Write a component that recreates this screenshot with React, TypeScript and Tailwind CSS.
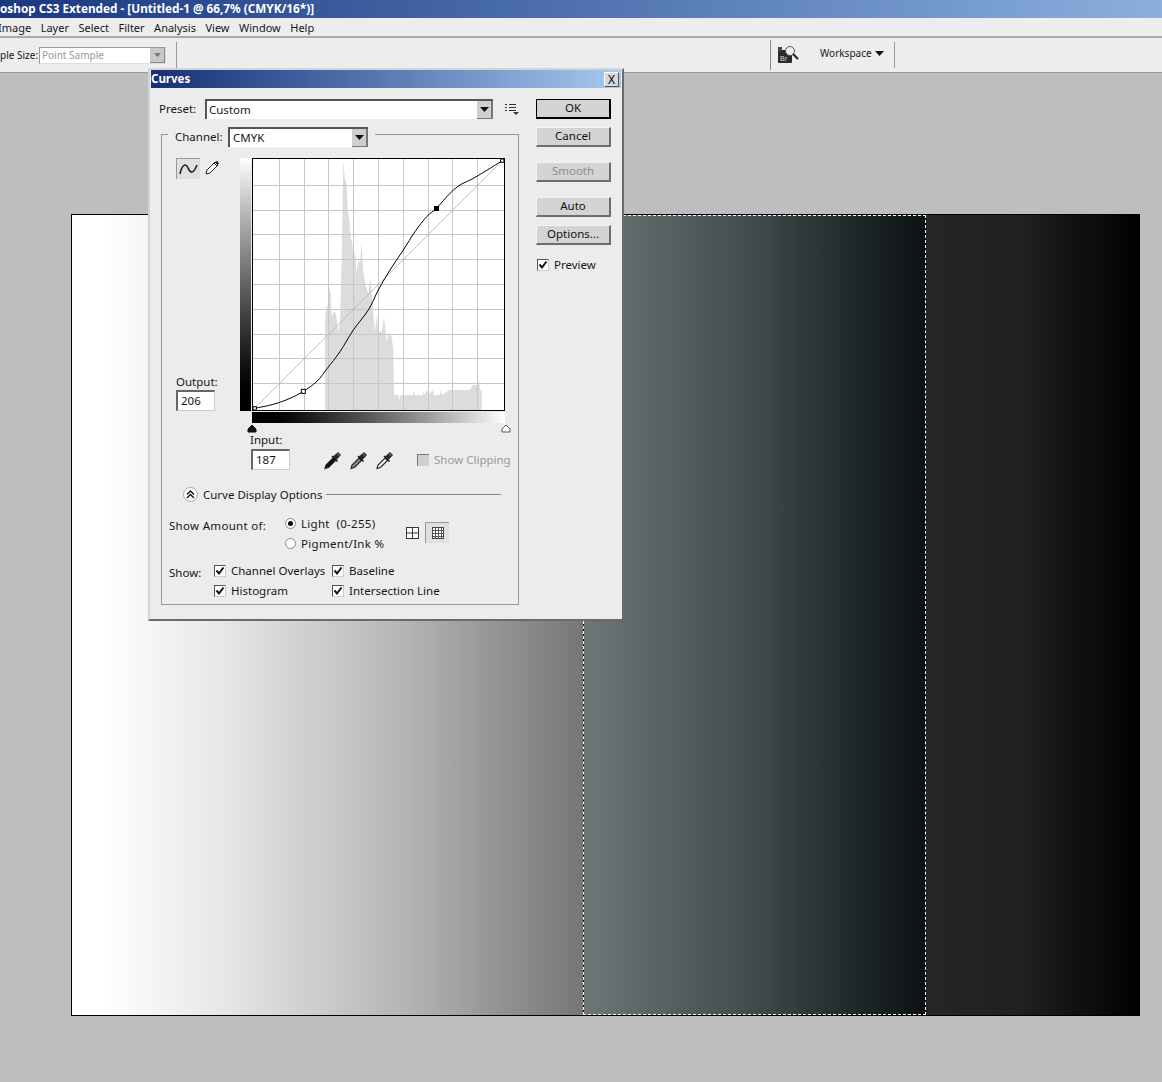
import React from 'react';

const curvePts: [number, number][] = [[44, 775], [100, 763], [150, 745], [190, 724], [230, 695], [262, 655], [300, 605], [340, 540], [385, 480], [415, 420], [450, 360], [490, 300], [525, 245], [560, 200], [589, 175], [630, 130], [660, 105], [700, 85], [750, 55], [787, 32]];

// catmull-rom through the sampled points
const curve = curvePts.reduce((d, p, i) => {
  if (i === 0) return `M${p[0]} ${p[1]}`;
  const a = curvePts[Math.max(i - 2, 0)];
  const b = curvePts[i - 1];
  const c = curvePts[Math.min(i + 1, curvePts.length - 1)];
  return `${d} C${b[0] + (p[0] - a[0]) / 6} ${b[1] + (p[1] - a[1]) / 6} ${p[0] - (c[0] - b[0]) / 6} ${p[1] - (c[1] - b[1]) / 6} ${p[0]} ${p[1]}`;
}, '');

const histogram = '255,780 255,515 260,460 264,480 268,410 272,430 275,500 282,485 288,490 295,545 300,520 303,400 306,280 310,30 315,90 320,100 323,180 328,210 332,260 337,280 340,330 345,300 350,370 355,330 360,340 365,280 370,370 378,410 385,430 392,385 398,470 405,545 410,495 415,545 425,545 432,500 440,575 445,550 455,560 460,600 462,735 475,735 478,750 482,735 520,735 522,720 526,735 548,735 550,720 553,735 562,720 566,735 578,720 582,735 600,735 603,720 606,735 628,720 690,720 698,705 712,705 716,690 720,720 725,720 725,780';
const gridLines = [27, 52, 76, 101, 126, 151, 176, 200, 225];

const Check = ({ label }: { label?: string }) => (
  <label className="flex items-center gap-[5px]">
    <span className="w-[12px] h-[12px] bg-white border-t border-l border-[#555] border-r border-b border-r-[#ccc] border-b-[#ccc] flex items-center justify-center">
      <svg width="10" height="10" viewBox="0 0 10 10"><path d="M1.5 4.5 4 7.5 8.5 1.5" fill="none" stroke="#111" strokeWidth="2" /></svg>
    </span>
    {label && <span>{label}</span>}
  </label>
);

const Btn = ({ children, def, off, cls }: { children: React.ReactNode; def?: boolean; off?: boolean; cls?: string }) => (
  <button className={`w-[75px] h-[20px] block bg-[#d4d4d4] text-center leading-[15px] pb-[2px] ${def ? 'border border-black border-r-2 border-b-2' : 'border-t border-l border-t-[#f4f4f4] border-l-[#f4f4f4] border-r-2 border-b-2 border-r-[#6e6e6e] border-b-[#6e6e6e]'} ${off ? 'text-[#8d8d8d]' : 'text-[#111]'} ${cls ?? ''}`}>
    {children}
  </button>
);

const Arrow = () => (
  <svg width="9" height="5" viewBox="0 0 9 5"><path d="M0 0h9L4.500 5z" fill="#111" /></svg>
);

const Dropper = ({ fill }: { fill: string }) => (
  <svg width="20" height="20" viewBox="0 0 20 20">
    <path d="M2 18.500 3 15l7-7 2.500 2.500-7 7z" fill={fill} stroke="#222" strokeWidth="1.100" />
    <path d="M10 6.500l5-4.500 3 3-4.500 5z" fill="#2a2a2a" />
    <path d="M9 6l5.500 5.500" stroke="#111" strokeWidth="1.400" />
    <path d="M14 3.500l2 2" stroke="#aaa" />
  </svg>
);

const Field = ({ value, w }: { value: string; w: string }) => (
  <div className={`${w} h-[21px] bg-white border-t-2 border-l-2 border-t-[#666] border-l-[#666] border-r border-b border-r-[#ccc] border-b-[#ccc] pl-[3px] leading-[17px]`}>{value}</div>
);

export default function App() {
  return (
    <div className="relative w-[1162px] h-[1082px] overflow-hidden flex flex-col bg-[#bebebe] text-[11.5px] text-[#161616] font-['Noto_Sans','Liberation_Sans',sans-serif]">
      <div className="h-[18px] shrink-0 bg-gradient-to-r from-[#1b3780] to-[#8bb0de] text-white text-[11.75px] font-bold leading-[17px] whitespace-nowrap">
        oshop CS3 Extended - [Untitled-1 @ 66,7% (CMYK/16*)]
      </div>

      <div className="h-[20px] shrink-0 bg-[#ededed] border-b-2 border-[#aaa] flex gap-[9.500px] -ml-[2px] leading-[19px] text-[11px]">
        <span>Image</span>
        <span>Layer</span>
        <span>Select</span>
        <span>Filter</span>
        <span>Analysis</span>
        <span>View</span>
        <span>Window</span>
        <span>Help</span>
      </div>

      <div className="h-[35px] shrink-0 bg-[#ededed] border-b border-[#999] flex items-center text-[10px]">
        <span className="w-[39px] whitespace-nowrap">ple Size:</span>
        <div className="w-[127px] h-[17px] mt-[1px] bg-white border-t border-l border-[#999] border-r border-b border-r-[#ddd] border-b-[#ddd] flex items-center justify-between text-[#999] pl-[2px]">
          Point Sample
          <span className="w-[15px] h-[15px] bg-[#c8c8c8] flex items-center justify-center border-r border-b border-[#888]">
            <svg width="7" height="4" viewBox="0 0 7 4"><path d="M0 0h7L3.500 4z" fill="#777" /></svg>
          </span>
        </div>
        <div className="ml-[10px] w-px h-[26px] bg-[#999]" />
        <div className="ml-[593px] w-px h-[30px] bg-[#888]" />
        <svg className="ml-[6px]" width="24" height="18" viewBox="0 0 24 18">
          <rect x="1" y="4" width="14" height="13" rx="1" fill="#2b2b2b" />
          <rect x="1" y="1" width="4" height="4" fill="#444" />
          <circle cx="13" cy="5" r="4.500" fill="#eee" stroke="#555" />
          <path d="M16 8l5 5" stroke="#222" strokeWidth="2" />
          <text x="3" y="15" fontSize="7" fill="#ddd" fontFamily="Liberation Sans">Br</text>
        </svg>
        <span className="ml-[19px] -mt-[3px]">Workspace</span>
        <span className="ml-[3px] -mt-[3px]"><Arrow /></span>
        <div className="ml-[10px] w-px h-[26px] bg-[#999]" />
      </div>

      <div className="flex-1 pt-[141px] pl-[71px]">
        <div className="w-[1069px] h-[802px] border border-black flex">
          <div className="w-[511px] bg-[linear-gradient(90deg,#fff_0%,#fff_6%,#e6e6e4_30%,#b5b5b5_65%,#767676_100%)]" />
          <div className="relative w-[343px] bg-gradient-to-r from-[#6d7778] via-[#414a4c] to-[#0c1213] border-x border-y-0 border-black">
            <div className="absolute -inset-x-px inset-y-0 border border-dashed border-white" />
          </div>
          <div className="flex-1 bg-[linear-gradient(90deg,#262626_0%,#202020_45%,#0c0c0c_80%,#000_100%)]" />
        </div>
      </div>

      {/* curves dialog */}
      <div className="absolute left-[148px] top-[68px] w-[476px] h-[553px] bg-[#ececec] border-t-2 border-l-2 border-t-[#d4d4d4] border-l-[#d4d4d4] border-r-2 border-b-2 border-r-[#6a6a6a] border-b-[#6a6a6a]">
        <div className="mx-px h-[18px] bg-gradient-to-r from-[#182e76] to-[#a6caf0] text-white font-bold leading-[18px] flex justify-between">
          <span>Curves</span>
          <span className="w-[15px] h-[15px] mt-[2px] mr-[2px] bg-[#d8d8d8] border-t border-l border-t-white border-l-white border-r border-b border-r-[#555] border-b-[#555] flex items-center justify-center text-[12px] leading-none text-black font-normal">X</span>
        </div>

        <div className="flex pl-[9px] pt-[11px]">
          <div className="w-[377px]">
            <div className="flex items-center">
              <span className="w-[46px]">Preset:</span>
              <div className="w-[288px] h-[20px] bg-white border-t-2 border-l-2 border-t-[#555] border-l-[#555] flex justify-between pl-[2px] leading-[17px]">
                Custom
                <span className="w-[16px] h-[18px] bg-[#cfcfcf] border-r-2 border-b border-[#777] flex items-center justify-center"><Arrow /></span>
              </div>
              <svg className="ml-[12px]" width="14" height="12" viewBox="0 0 14 12">
                <path d="M0 1.500h2M4 1.500h7M0 4.500h2M4 4.500h7M0 7.500h2M4 7.500h7" stroke="#333" />
                <path d="M8 9h6l-3 3z" fill="#333" />
              </svg>
            </div>

            <fieldset className="ml-[2px] mt-[3px] w-[358px] h-[483px] border border-[#999]">
              <legend className="ml-[6px] px-[7px] pt-[5px]">
                <div className="flex items-center">
                  <span className="w-[53px]">Channel:</span>
                  <div className="w-[140px] h-[20px] bg-white border-t-2 border-l-2 border-t-[#555] border-l-[#555] flex justify-between pl-[3px] leading-[17px]">
                    CMYK
                    <span className="w-[16px] h-[18px] bg-[#cfcfcf] border-r-2 border-b border-[#777] flex items-center justify-center"><Arrow /></span>
                  </div>
                </div>
              </legend>

              <div className="flex mt-[11px]">
                <div className="w-[78px] h-[253px] pl-[14px] flex flex-col">
                  <div className="flex items-start">
                    <div className="w-[24px] h-[21px] bg-[#e0e0e0] border-t border-l border-[#999] flex items-center justify-center">
                      <svg width="20" height="14" viewBox="0 0 20 14"><path d="M1 12C3 2 7 1 9 6s5 7 9-3" fill="none" stroke="#222" strokeWidth="1.600" /></svg>
                    </div>
                    <svg className="ml-[4px] mt-[2px]" width="16" height="16" viewBox="0 0 16 16">
                      <path d="M2 14l1-4 8-8 3 3-8 8z" fill="#fff" stroke="#222" />
                      <path d="M10 3l3 3" stroke="#222" />
                      <path d="M11 2l3 3 1-2-2-2z" fill="#222" />
                    </svg>
                  </div>
                  <div className="mt-auto">
                    <div className="leading-[16px]">Output:</div>
                    <Field value="206" w="w-[39px]" />
                  </div>
                </div>
                <div className="w-[11px] h-[253px] mr-px bg-gradient-to-b from-white to-black" />
                <div className="w-[253px] h-[253px] bg-white">
                  <svg width="253" height="253" viewBox="36 24 759 759">
                    <polygon points={histogram} fill="#dcdcdc" />
                    {gridLines.map(n => (
                      <g key={n} stroke="#c6c6c6" strokeWidth="3">
                        <line x1={37.5 + n * 3} y1="24" x2={37.5 + n * 3} y2="783" />
                        <line x1="36" y1={25.5 + n * 3} x2="795" y2={25.5 + n * 3} />
                      </g>
                    ))}
                    <line x1="44" y1="775" x2="787" y2="32" stroke="#b4b4b4" strokeWidth="2.400" />
                    <path d={curve} fill="none" stroke="#000" strokeWidth="3" />
                    <rect x="39" y="770" width="10" height="10" fill="#fff" stroke="#000" strokeWidth="3" />
                    <rect x="184" y="718" width="12" height="12" fill="#fff" stroke="#000" strokeWidth="3" />
                    <rect x="582" y="168" width="15" height="15" fill="#000" />
                    <rect x="782" y="27" width="10" height="10" fill="#fff" stroke="#000" strokeWidth="3" />
                    <rect x="37.500" y="25.500" width="756" height="756" fill="none" stroke="#000" strokeWidth="3" />
                  </svg>
                </div>
              </div>

              <div className="ml-[90px] mt-px w-[253px] h-[11px] bg-gradient-to-r from-black to-white" />
              <div className="ml-[85px] w-[264px] h-[8px] mt-px flex justify-between">
                <svg width="10" height="9" viewBox="0 0 10 9"><path d="M5 1 9 5v3H1V5z" fill="#111" stroke="#111" /></svg>
                <svg width="10" height="9" viewBox="0 0 10 9"><path d="M5 1 9 5v3H1V5z" fill="#fff" stroke="#555" /></svg>
              </div>
              <div className="ml-[88px] leading-[16px]">Input:</div>
              <div className="flex items-center ml-[89px] mt-px">
                <Field value="187" w="w-[39px]" />
                <div className="ml-[33px] flex gap-[6px]">
                  <Dropper fill="#111" />
                  <Dropper fill="#888" />
                  <Dropper fill="#eee" />
                </div>
                <span className="ml-[22px] w-[12px] h-[12px] bg-[#cfcfcf] border-t border-l border-[#777]" />
                <span className="ml-[5px] text-[#9a9a9a]">Show Clipping</span>
              </div>

              <div className="flex items-center ml-[21px] mt-[16px]">
                <span className="w-[15px] h-[15px] rounded-full bg-white border border-[#aaa] flex items-center justify-center">
                  <svg width="9" height="9" viewBox="0 0 9 9"><path d="M1 4.500 4.500 1 8 4.500M1 8 4.500 4.500 8 8" fill="none" stroke="#111" strokeWidth="1.400" /></svg>
                </span>
                <span className="ml-[5px]">Curve Display Options</span>
                <span className="ml-[4px] w-[175px] h-px bg-[#888]" />
              </div>

              <div className="flex ml-[7px] mt-[12px]">
                <span className="w-[116px] mt-[2px] tracking-[0.3px]">Show Amount of:</span>
                <div className="flex flex-col gap-[3px] leading-[17px] tracking-[0.3px]">
                  <div className="flex items-center gap-[5px]">
                    <span className="w-[11px] h-[11px] rounded-full bg-white border border-[#888] flex items-center justify-center"><span className="w-[5px] h-[5px] rounded-full bg-black" /></span>
                    Light&nbsp;&nbsp;(0-255)
                  </div>
                  <div className="flex items-center gap-[5px]">
                    <span className="w-[11px] h-[11px] rounded-full bg-white border border-[#888]" />
                    Pigment/Ink %
                  </div>
                </div>
                <div className="flex ml-[21px] mt-[9px] items-start">
                  <svg className="mt-[2px]" width="15" height="14" viewBox="0 0 15 14">
                    <rect x="1.500" y="1.500" width="12" height="11" fill="#fff" stroke="#333" />
                    <path d="M7.500 1.500v11M1.500 7h12" stroke="#333" />
                  </svg>
                  <div className="ml-[5px] -mt-[2px] w-[24px] h-[21px] border-t border-l border-[#999] bg-[#e0e0e0] flex items-center justify-center">
                    <svg width="14" height="14" viewBox="0 0 14 14">
                      <rect x="1.500" y="1.500" width="11" height="11" fill="#fff" stroke="#444" />
                      <path d="M4.500 1.500v11M7.500 1.500v11M10.500 1.500v11M1.500 4.500h11M1.500 7.500h11M1.500 10.500h11" stroke="#555" />
                    </svg>
                  </div>
                </div>
              </div>

              <div className="flex ml-[7px] mt-[10px]">
                <span className="w-[45px] mt-[2px]">Show:</span>
                <div className="grid grid-cols-[118px_auto] gap-y-[3px] leading-[17px]">
                  <Check label="Channel Overlays" />
                  <Check label="Baseline" />
                  <Check label="Histogram" />
                  <Check label="Intersection Line" />
                </div>
              </div>
            </fieldset>
          </div>

          <div className="flex flex-col">
            <Btn def>OK</Btn>
            <Btn cls="mt-[8px]">Cancel</Btn>
            <Btn off cls="mt-[15px]">Smooth</Btn>
            <Btn cls="mt-[15px]">Auto</Btn>
            <Btn cls="mt-[8px]">Options...</Btn>
            <div className="mt-[11px] ml-px"><Check label="Preview" /></div>
          </div>
        </div>
      </div>
    </div>
  );
}
